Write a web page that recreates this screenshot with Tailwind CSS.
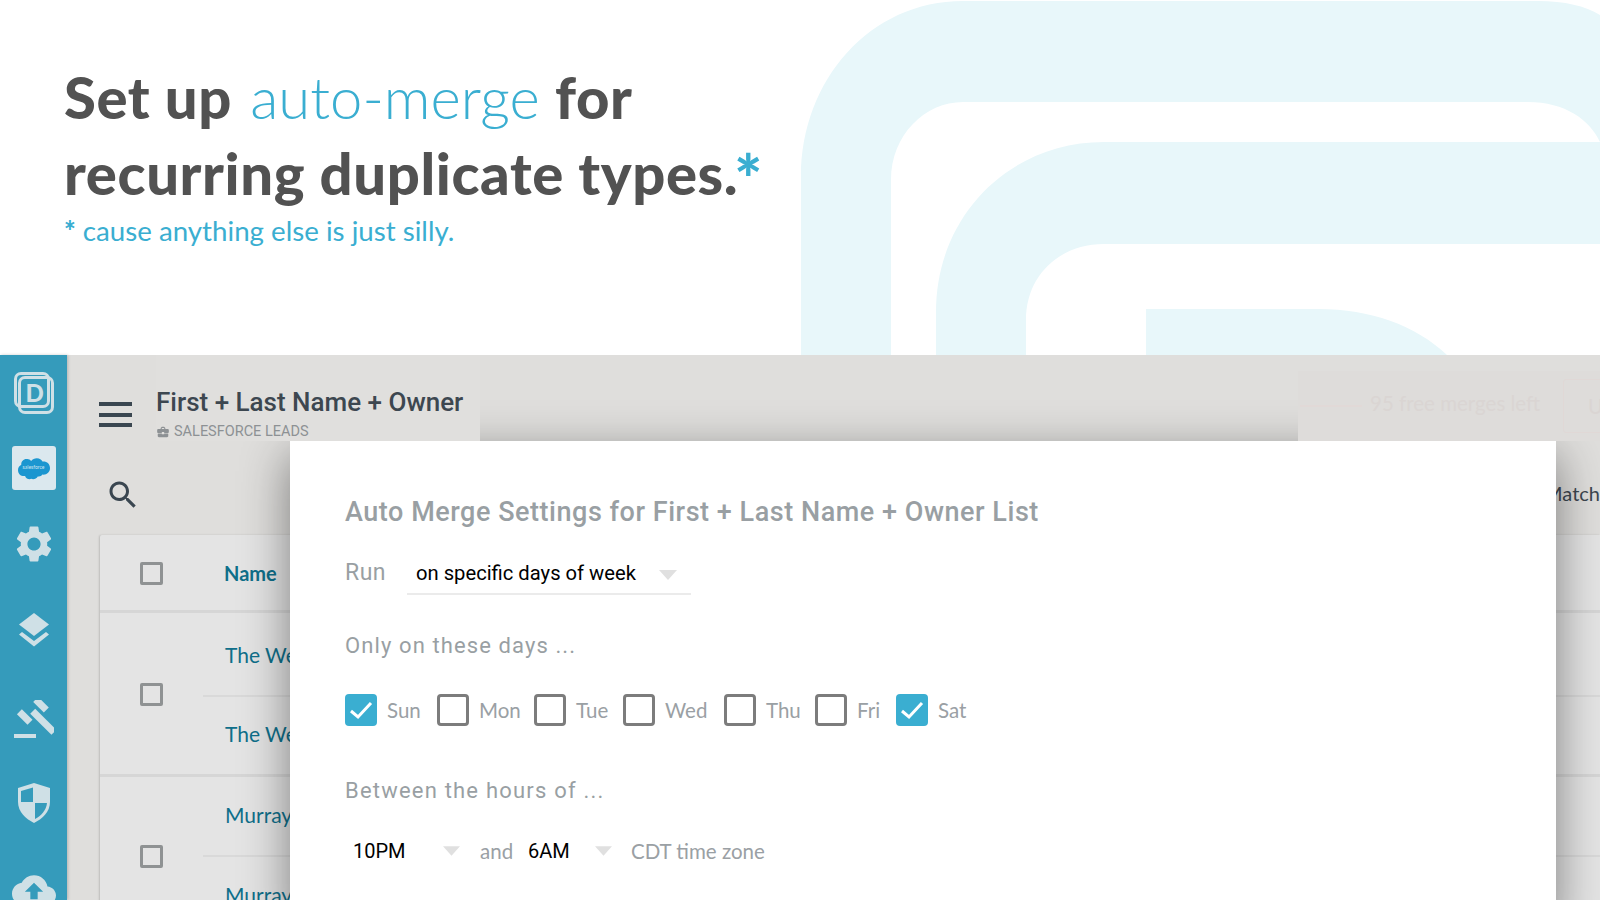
<!DOCTYPE html>
<html lang="en">
<head>
  <meta charset="UTF-8">
  <title>Auto Merge</title>
  <script src="https://cdn.jsdelivr.net/npm/@tailwindcss/browser@4"></script>
</head>
<body class="bg-white">
<div class="relative w-[1600px] h-[900px] overflow-hidden flex flex-col">

  <!-- hero -->
  <div class="relative h-[355px] shrink-0 pl-[64px] pt-[59px] font-['Lato']">
    <svg class="absolute left-0 top-0" width="1600" height="355" viewBox="0 0 1600 355" fill="#e8f7fa">
      <path d="M801 355V177C801 80 870 1 963 1H1538C1565 1 1585 6 1600 15V142C1590 120 1565 102 1528 102H963C925 102 891 135 891 180V355Z"/>
      <path d="M936 355V312C936 215 1010 142 1104 142H1600V244H1104C1060 244 1026 275 1026 320V355Z"/>
      <path d="M1146 355V309H1319C1370 309 1415 325 1447 355Z"/>
    </svg>
    <h1 class="relative text-[58px] leading-[75.500px] font-black tracking-[0.6px] text-[#525252]">Set up <span class="ml-[4px] mr-[1px] font-light tracking-normal text-[#3aaed1]">auto-merge</span> for<br>recurring duplicate types.<span class="relative top-[9px] -ml-[4px] text-[66px] leading-[0] tracking-normal text-[#3aaed1]">*</span></h1>
    <p class="relative mt-[3px] text-[27.700px] leading-[36px] font-normal text-[#3aaed1]"><span class="font-black">*</span> cause anything else is just silly.</p>
  </div>

  <!-- app behind the dialog -->
  <div class="flex-1 flex bg-[#dfdedc] min-h-0">
    <aside class="w-[67px] shrink-0 bg-[#359bbb] shadow-[1px_0_3px_rgba(0,0,0,0.2)] flex flex-col items-center text-[#cfe0e6] overflow-hidden">
      <div class="relative w-[40px] h-[42px] mt-[17px] shrink-0">
        <div class="absolute left-0 top-0 w-[36px] h-[36px] rounded-[7px] border-[3px] border-[#cfe0e6]"></div>
        <div class="absolute left-[4px] top-[4px] w-[36px] h-[38px] rounded-[7px] border-[3px] border-[#cfe0e6]"></div>
        <span class="absolute left-[12px] top-[7px] text-[24px] leading-[28px] font-black font-['Lato']">D</span>
      </div>
      <div class="w-[44px] h-[44px] mt-[32px] shrink-0 rounded-[3px] bg-[#dbe8ee] flex items-center justify-center relative">
        <svg width="32" height="23" viewBox="0 0 34 24" fill="#1b96d0"><path d="M14 4C15.500 2 17.500 1 20 1C23 1 25 2.500 26 4.500C30.500 4 34 7 34 11.500C34 16 30.500 19 26 18.500C25 20 23 21 21 20.500C19.500 23 16.500 24 14 23C12 24 8.500 23 7.500 20C3 20.500 0 17.500 0 13.500C0 11 1.500 9 3.500 8C3 4 7 1 10 2C11.500 2 13 3 14 4Z"/></svg>
        <span class="absolute inset-0 flex items-center justify-center text-[5px] text-[#cfe6f2] font-['Lato']">salesforce</span>
      </div>
      <svg class="mt-[32px] shrink-0" width="44" height="44" viewBox="0 0 24 24" fill="currentColor"><path d="M19.14 12.94c.04-.3.06-.61.06-.94 0-.32-.02-.64-.07-.94l2.030-1.580c.18-.14.23-.41.12-.61l-1.920-3.320c-.12-.22-.37-.29-.59-.22l-2.390.96c-.5-.38-1.030-.7-1.620-.94l-.36-2.540c-.04-.24-.24-.41-.48-.41h-3.840c-.24 0-.43.17-.47.41l-.36 2.540c-.59.24-1.130.57-1.620.94l-2.390-.96c-.22-.08-.47 0-.59.22L2.740 8.870c-.12.21-.08.47.12.61l2.030 1.580c-.05.3-.09.63-.09.94s.02.64.07.94l-2.030 1.580c-.18.14-.23.41-.12.61l1.920 3.320c.12.22.37.29.59.22l2.390-.96c.5.38 1.030.7 1.620.94l.36 2.540c.05.24.24.41.48.41h3.840c.24 0 .44-.17.47-.41l.36-2.540c.59-.24 1.130-.56 1.620-.94l2.390.96c.22.08.47 0 .59-.22l1.920-3.320c.12-.22.07-.47-.12-.61l-2.010-1.580zM12 15.600c-1.980 0-3.600-1.620-3.600-3.600s1.620-3.600 3.600-3.600 3.600 1.620 3.600 3.600-1.620 3.600-3.600 3.600z"/></svg>
      <svg class="mt-[47px] shrink-0" width="36" height="36" viewBox="0 0 36 36" fill="currentColor"><path d="M18 0L33 11.500L18 23L3 11.500Z"/><path d="M6 19L18 28L30 19L33 21.500L18 33.500L3 21.500Z"/></svg>
      <svg class="mt-[51px] shrink-0" width="40" height="40" viewBox="0 0 40 40" fill="currentColor"><rect x="20" y="1" width="15" height="7" transform="rotate(45 27 4)"/><rect x="14" y="14" width="30" height="7" transform="rotate(45 24 20)"/><rect x="3" y="13" width="15" height="7" transform="rotate(45 10 17)"/><rect x="0" y="34" width="22" height="4"/></svg>
      <svg class="mt-[43px] shrink-0" width="34" height="40" viewBox="0 0 34 40"><path fill="currentColor" d="M17 0L33 5V19C33 29 25 36 17 40C9 36 1 29 1 19V5Z"/><path fill="#359bbb" d="M16 4.500L4 8V19H16Z"/><path fill="#359bbb" d="M18 20H30C29.500 27 24 33 18 36Z"/></svg>
      <svg class="mt-[45px] shrink-0" width="44" height="44" viewBox="0 0 24 24" fill="currentColor"><path d="M19.35 10.040C18.670 6.590 15.640 4 12 4 9.110 4 6.600 5.640 5.350 8.040 2.340 8.360 0 10.910 0 14c0 3.310 2.690 6 6 6h13c2.760 0 5-2.240 5-5 0-2.640-2.050-4.780-4.650-4.960zM14 13v4h-4v-4H7l5-5 5 5h-3z"/></svg>
    </aside>

    <div class="flex-1 flex flex-col min-w-0">
      <!-- top bar -->
      <div class="h-[86px] shrink-0 flex items-start pl-[32px]">
        <div class="w-[33px] mt-[47px] flex flex-col gap-[6.500px] shrink-0">
          <div class="h-[4px] bg-[#3a4650]"></div>
          <div class="h-[4px] bg-[#3a4650]"></div>
          <div class="h-[4px] bg-[#3a4650]"></div>
        </div>
        <div class="relative z-30 ml-[24px] w-[324px] h-[86px] pt-[32px] bg-[#e0dfdd] font-['Roboto']">
          <div class="text-[26px] leading-[30px] font-medium text-[#3d4750] whitespace-nowrap">First + Last Name + Owner</div>
          <div class="flex items-center gap-[4px] h-[20px] mt-[5px] text-[14.500px] text-[#8d9194] whitespace-nowrap">
            <svg width="14" height="14" viewBox="0 0 24 24" fill="#8d9194"><path d="M10 16v-1H3.010L3 19c0 1.110.89 2 2 2h14c1.110 0 2-.89 2-2v-4h-7v1h-4zm10-9h-4.010V5l-2-2h-4l-2 2v2H4c-1.100 0-2 .9-2 2v3c0 1.110.89 2 2 2h6v-2h4v2h6c1.100 0 2-.9 2-2V9c0-1.100-.9-2-2-2zm-6 0h-4V5h4v2z"/></svg>
            SALESFORCE LEADS
          </div>
        </div>
        <div class="relative z-30 ml-auto w-[302px] h-[70px] mt-[16px] bg-[#dedcda] flex items-center font-['Lato'] text-[20.500px] text-[#dad5d3] whitespace-nowrap overflow-hidden">
          <div class="w-[62px] h-[2px] bg-[#e1d9d7] ml-[2px] mr-[8px] shrink-0"></div>
          <span class="mb-[6px] shrink-0">95 free merges left</span>
          <div class="ml-[23px] w-[60px] h-[54px] border border-[#e0d8d6] rounded-[3px] pl-[24px] leading-[52px] shrink-0">U</div>
        </div>
      </div>

      <!-- search row -->
      <div class="h-[94px] shrink-0 flex items-center pl-[38px] relative">
        <svg class="mt-[14px]" width="36" height="36" viewBox="0 0 24 24" fill="#3a4650"><path d="M15.500 14h-.79l-.28-.27C15.410 12.590 16 11.110 16 9.500 16 5.910 13.090 3 9.500 3S3 5.910 3 9.500 5.910 16 9.500 16c1.610 0 3.090-.59 4.230-1.570l.27.28v.79l5 4.990L20.490 19l-4.990-5zm-6 0C7.010 14 5 11.990 5 9.500S7.010 5 9.500 5 14 7.010 14 9.500 11.990 14 9.500 14z"/></svg>
        <span class="ml-auto mt-[10px] font-['Lato'] text-[20px] text-[#3d4750]">Match</span>
      </div>

      <!-- table -->
      <div class="ml-[33px] flex-1 bg-[#e4e4e4] rounded-tl-[2px] shadow-[-1px_0_2px_rgba(0,0,0,0.15)] font-['Lato']">
        <div class="h-[78px] border-b-[3px] border-[#d6d6d6] flex items-center">
          <div class="w-[40px] shrink-0"></div>
          <div class="w-[23px] h-[23px] mt-[2px] border-[3px] border-[#8f9293] rounded-[2px] shrink-0"></div>
          <div class="ml-[61px] text-[20px] font-bold text-[#0f6f8a]">Name</div>
        </div>
        <div class="h-[164px] flex border-b-[3px] border-[#d6d6d6]">
          <div class="w-[103px] shrink-0 pl-[40px] flex items-center"><div class="w-[23px] h-[23px] mt-[2px] border-[3px] border-[#8f9293] rounded-[2px]"></div></div>
          <div class="flex-1 text-[21px] text-[#0f6f8a]">
            <div class="h-[84px] border-b-2 border-[#d9d9d9] pl-[22px] pt-[27px] leading-[30px]">The Wedding</div>
            <div class="pl-[22px] pt-[22px] leading-[30px]">The Wedding</div>
          </div>
        </div>
        <div class="flex">
          <div class="w-[103px] shrink-0 pl-[40px] pt-[68px]"><div class="w-[23px] h-[23px] border-[3px] border-[#8f9293] rounded-[2px]"></div></div>
          <div class="flex-1 text-[21px] text-[#0f6f8a]">
            <div class="h-[80px] border-b-2 border-[#d9d9d9] pl-[22px] pt-[23px] leading-[30px]">Murray Hill</div>
            <div class="pl-[22px] pt-[23px] leading-[30px]">Murray Hill</div>
          </div>
        </div>
      </div>
    </div>
  </div>

  <!-- dialog -->
  <div class="absolute z-20 left-[290px] top-[441px] w-[1266px] h-[480px] bg-white shadow-[0_14px_45px_rgba(0,0,0,0.45)] pl-[55px] pt-[56px] font-['Roboto']">
    <h2 class="text-[27px] leading-[30px] font-medium tracking-[0.53px] text-[#999fa3] whitespace-nowrap">Auto Merge Settings for First + Last Name + Owner List</h2>

    <div class="flex items-start mt-[31px] h-[52px]">
      <span class="w-[62px] text-[23px] leading-[30px] tracking-[0.5px] text-[#999fa3]">Run</span>
      <div class="w-[284px] h-[37px] border-b-2 border-[#ebebeb] flex items-start pl-[9px]">
        <span class="text-[20.200px] leading-[30px] text-black whitespace-nowrap">on specific days of week</span>
        <svg class="ml-[23px] mt-[12px]" width="18" height="10" viewBox="0 0 18 10" fill="#e0e0e0"><path d="M0 0H18L9 10Z"/></svg>
      </div>
    </div>

    <p class="text-[22px] leading-[30px] tracking-[1.100px] text-[#999fa3] mt-[21px] whitespace-nowrap">Only on these days ...</p>

    <div class="flex items-center mt-[33px] h-[32px] font-['Lato'] text-[20.500px] text-[#9aa0a4]">
      <div class="w-[32px] h-[32px] rounded-[4px] bg-[#3aaed1] flex items-center justify-center"><svg width="24" height="20" viewBox="0 0 24 20" fill="none" stroke="white" stroke-width="3"><path d="M2 11L9 17L22 3"/></svg></div>
      <span class="ml-[10px] w-[50px]">Sun</span>
      <div class="w-[32px] h-[32px] rounded-[4px] border-[3px] border-[#7c7c7c]"></div>
      <span class="ml-[10px] w-[55px]">Mon</span>
      <div class="w-[32px] h-[32px] rounded-[4px] border-[3px] border-[#7c7c7c]"></div>
      <span class="ml-[10px] w-[47px]">Tue</span>
      <div class="w-[32px] h-[32px] rounded-[4px] border-[3px] border-[#7c7c7c]"></div>
      <span class="ml-[10px] w-[59px]">Wed</span>
      <div class="w-[32px] h-[32px] rounded-[4px] border-[3px] border-[#7c7c7c]"></div>
      <span class="ml-[10px] w-[49px]">Thu</span>
      <div class="w-[32px] h-[32px] rounded-[4px] border-[3px] border-[#7c7c7c]"></div>
      <span class="ml-[10px] w-[39px]">Fri</span>
      <div class="w-[32px] h-[32px] rounded-[4px] bg-[#3aaed1] flex items-center justify-center"><svg width="24" height="20" viewBox="0 0 24 20" fill="none" stroke="white" stroke-width="3"><path d="M2 11L9 17L22 3"/></svg></div>
      <span class="ml-[10px]">Sat</span>
    </div>

    <p class="text-[22px] leading-[30px] tracking-[1.200px] text-[#999fa3] mt-[50px] whitespace-nowrap">Between the hours of ...</p>

    <div class="flex items-center mt-[30px] h-[30px] text-[20px] whitespace-nowrap">
      <span class="ml-[8px] w-[90px] text-black">10PM</span>
      <svg width="17" height="10" viewBox="0 0 18 10" fill="#e0e0e0"><path d="M0 0H18L9 10Z"/></svg>
      <span class="ml-[20px] w-[48px] font-['Lato'] text-[20.500px] text-[#9aa0a4]">and</span>
      <span class="w-[67px] text-black">6AM</span>
      <svg width="17" height="10" viewBox="0 0 18 10" fill="#e0e0e0"><path d="M0 0H18L9 10Z"/></svg>
      <span class="ml-[19px] font-['Lato'] text-[20.500px] text-[#9aa0a4]">CDT time zone</span>
    </div>
  </div>
</div>
</body>
</html>
